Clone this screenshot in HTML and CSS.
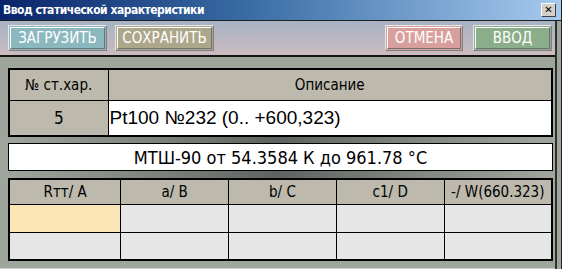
FILE: index.html
```html
<!DOCTYPE html>
<html lang="ru">
<head>
    <meta charset="UTF-8">
    <title>Ввод статической характеристики</title>
    <link rel="stylesheet" href="styles.css">
</head>
<body>
    <div class="window">
        <div class="titlebar">
            <span class="title">Ввод статической характеристики</span>
            <button class="close-btn">&#x2715;</button>
        </div>

        <div class="client">
            <div class="toolbar">
                <div class="toolbar-left">
                    <button class="btn btn-load"><span>ЗАГРУЗИТЬ</span></button>
                    <button class="btn btn-save"><span>СОХРАНИТЬ</span></button>
                </div>
                <div class="toolbar-right">
                    <button class="btn btn-cancel"><span>ОТМЕНА</span></button>
                    <button class="btn btn-ok"><span>ВВОД</span></button>
                </div>
            </div>

            <div class="body">
                <table class="char-table">
                    <tr class="head">
                        <th class="col-num">№ ст.хар.</th>
                        <th>Описание</th>
                    </tr>
                    <tr class="data">
                        <td class="num">5</td>
                        <td class="desc">Pt100 №232 (0.. +600,323)</td>
                    </tr>
                </table>

                <div class="scale-panel">
                    <div class="scale-info">МТШ-90 от 54.3584 К до 961.78 °С</div>
                </div>

                <table class="coef-table">
                    <tr class="head">
                        <th class="c1">Rтт/ A</th>
                        <th>a/ B</th>
                        <th>b/ C</th>
                        <th>c1/ D</th>
                        <th class="c5">-/ W(660.323)</th>
                    </tr>
                    <tr>
                        <td class="active"></td>
                        <td></td>
                        <td></td>
                        <td></td>
                        <td></td>
                    </tr>
                    <tr>
                        <td></td>
                        <td></td>
                        <td></td>
                        <td></td>
                        <td></td>
                    </tr>
                </table>
            </div>
        </div>
    </div>
</body>
</html>
```

FILE: styles.css
```css
:root {
    --frame: #9ea59b;
    --tan: #bdb9ad;
    --cell: #e6e6e6;
    --active: #fde6b5;
}

* {
    margin: 0;
    padding: 0;
    box-sizing: border-box;
}

body {
    background: #ffffff;
    font-family: "DejaVu Sans", "Noto Sans", sans-serif;
    font-stretch: condensed;
    color: #000;
    width: 564px;
    height: 269px;
    overflow: hidden;
}

.window {
    width: 562px;
    height: 269px;
    background: var(--frame);
    border-right: 1px solid #202020;
    display: flex;
    flex-direction: column;
}

.titlebar {
    height: 21px;
    flex: none;
    display: flex;
    align-items: center;
    justify-content: space-between;
    padding: 0 5px 0 3px;
    background: linear-gradient(to right, #0a246a 0%, #3a6ea5 45%, #a6caf0 100%);
    border-bottom: 1px solid #202020;
}

.title {
    color: #fff;
    font-weight: bold;
    font-size: 12px;
    letter-spacing: -0.5px;
}

.close-btn {
    width: 15px;
    height: 14px;
    background: #d4d0c8;
    border: 1px solid;
    border-color: #fff #404040 #404040 #fff;
    font-family: "DejaVu Sans", sans-serif;
    font-weight: bold;
    font-size: 10px;
    line-height: 12px;
    color: #000;
    text-align: center;
}

.client {
    width: 557px;
    flex: 1;
    display: flex;
    flex-direction: column;
    border-right: 2px solid #303030;
}

.toolbar {
    height: 36px;
    flex: none;
    display: flex;
    justify-content: space-between;
    align-items: flex-start;
    padding: 4px 3px 0 8px;
    background: linear-gradient(to bottom, #a7b3c4 0%, #cbbbbf 100%);
    border-bottom: 2px solid #151515;
}

.toolbar-left,
.toolbar-right {
    display: flex;
    gap: 8px;
}

.toolbar-right {
    gap: 10px;
}

.btn {
    height: 26px;
    display: flex;
    padding: 1px;
    border: 1px solid;
    border-color: #e8e8e8 #808080 #808080 #e8e8e8;
    cursor: pointer;
}

.btn span {
    flex: 1;
    display: flex;
    align-items: center;
    justify-content: center;
    border: 1px solid;
    border-color: #ffffff #707070 #707070 #ffffff;
    color: #fff;
    font-family: "DejaVu Sans", sans-serif;
    font-stretch: condensed;
    font-size: 15px;
}

.btn-load { width: 99px; background: #8ab8be; }
.btn-save { width: 99px; background: #aca68a; }
.btn-cancel { width: 78px; background: #d8a09d; }
.btn-ok { width: 79px; background: #8aae89; }

.body {
    flex: 1;
    display: flex;
    flex-direction: column;
    padding: 11px 3px 0 8px;
    border-bottom: 1px solid #d0d4d0;
}

table {
    border-collapse: collapse;
    width: 545px;
}

th, td {
    border: 1px solid #000;
    font-weight: normal;
    text-align: center;
}

.char-table {
    border: 2px solid #000;
}

.char-table .head th {
    height: 31px;
    background: var(--tan);
    font-size: 15px;
}

.char-table .col-num {
    width: 99px;
}

.char-table .data td {
    height: 36px;
}

.char-table .num {
    background: var(--tan);
    font-size: 17px;
}

.char-table .desc {
    background: #fff;
    text-align: left;
    padding-left: 1px;
    font-family: "Liberation Sans", Arial, sans-serif;
    font-stretch: normal;
    font-size: 19px;
}

.scale-panel {
    margin: 0 -3px 0 -8px;
    padding: 6px 3px 7px 8px;
    background: linear-gradient(to right, #a1a69f 0%, #7c807b 30%, #5f635f 50%, #7c807b 70%, #a1a69f 100%);
}

.scale-info {
    height: 28px;
    width: 545px;
    background: #fff;
    border: 1px solid #000;
    display: flex;
    align-items: center;
    justify-content: center;
    font-size: 18px;
}

.coef-table {
    border: 2px solid #000;
}

.coef-table th {
    height: 25px;
    width: 108px;
    background: var(--tan);
    font-size: 15px;
}

.coef-table th.c1 {
    width: 112px;
}

.coef-table td {
    height: 28px;
    background: var(--cell);
}

.coef-table td.active {
    background: var(--active);
}
```
